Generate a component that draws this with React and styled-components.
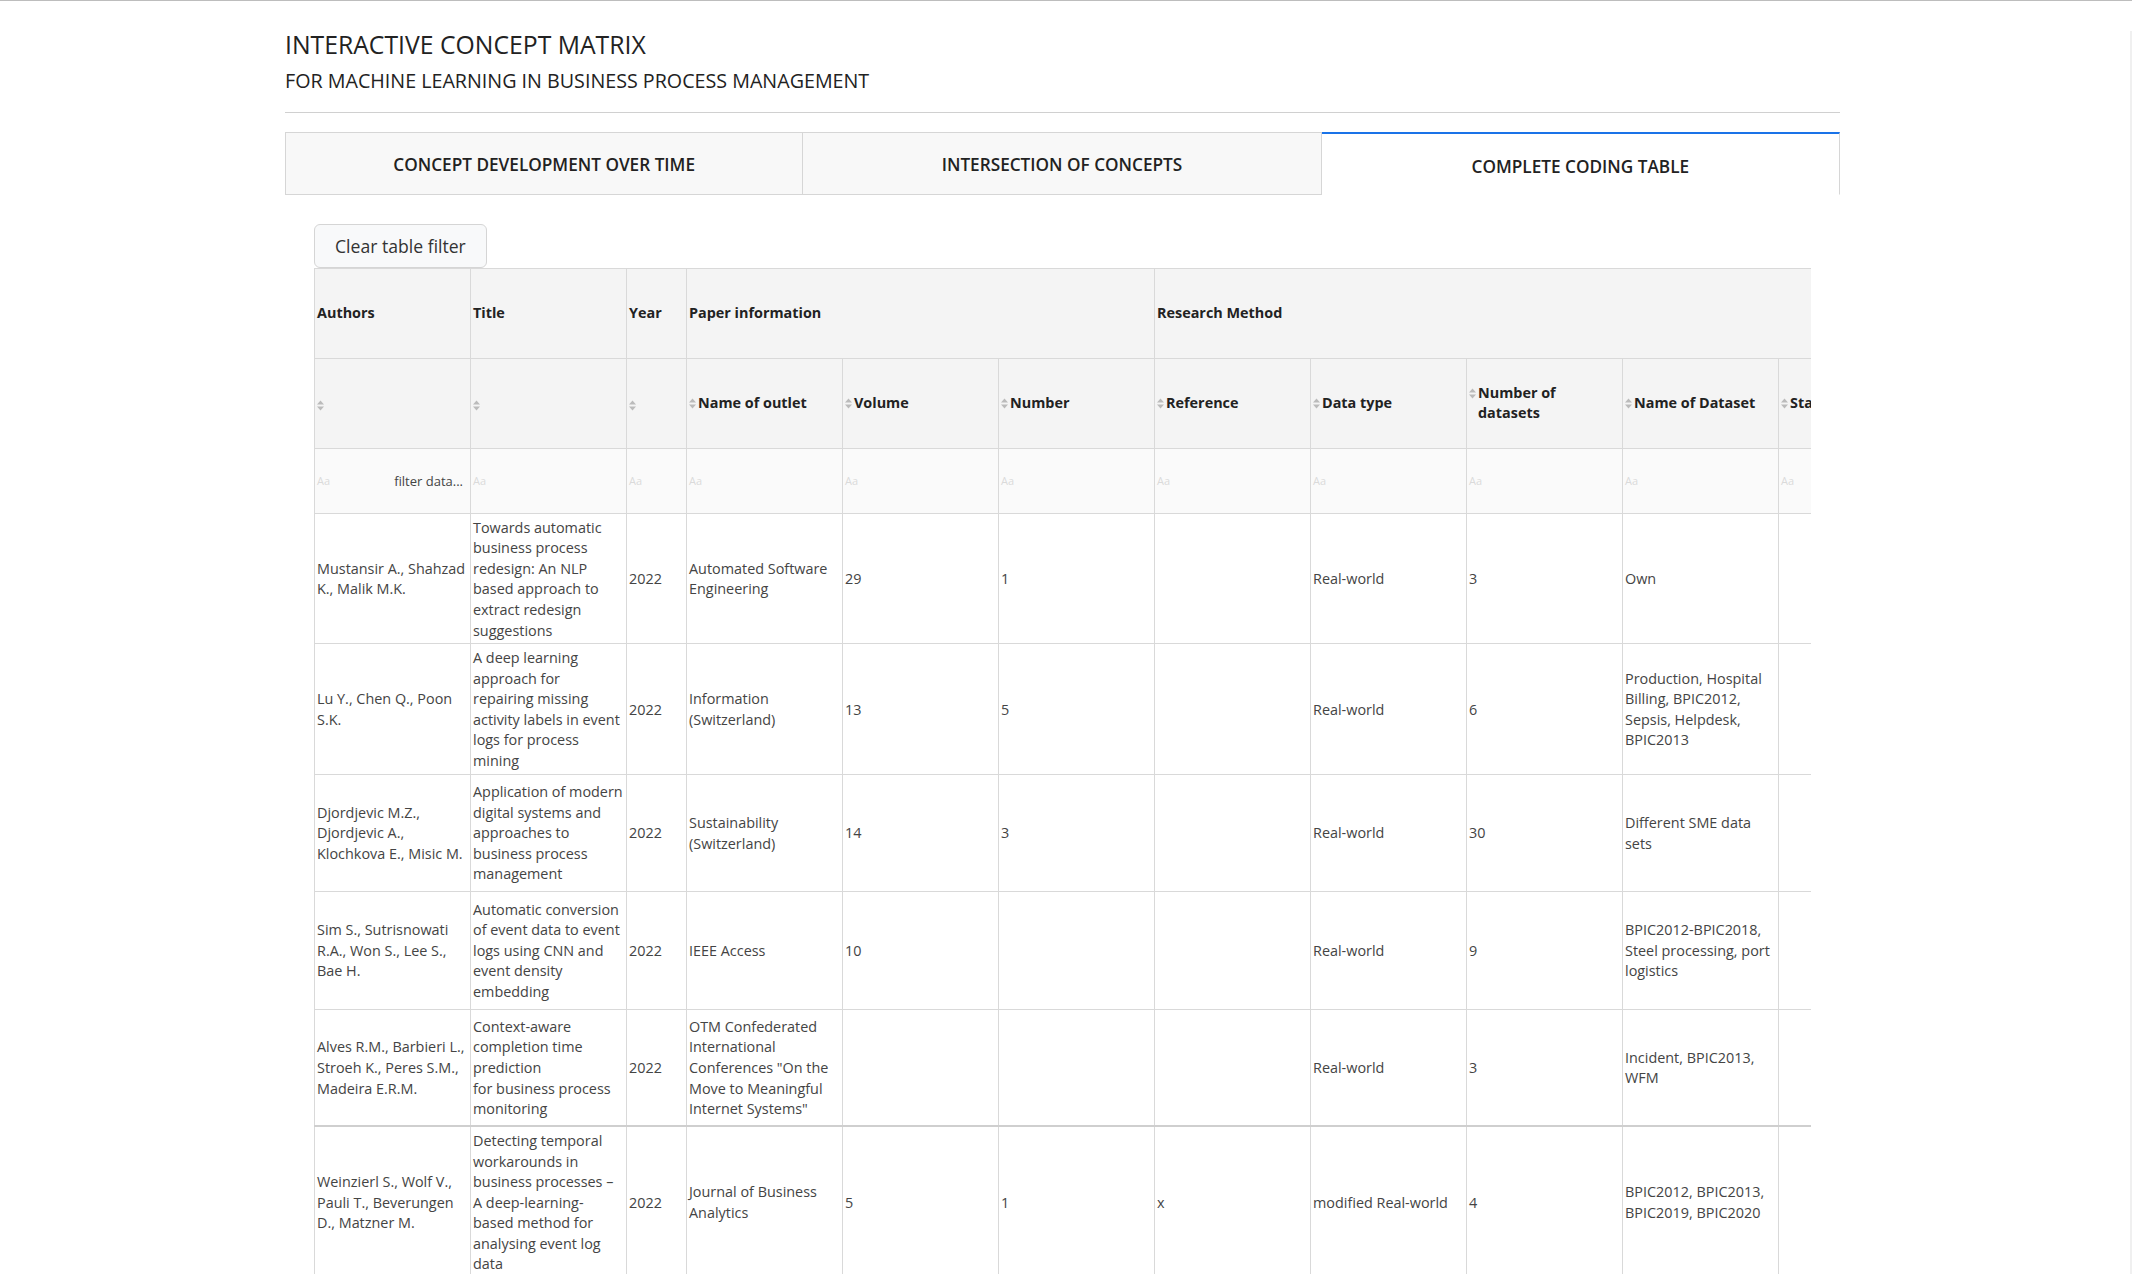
import React from 'react';
import styled, { createGlobalStyle, css } from 'styled-components';

const Colors = {
  text: '#222',
  body: '#444',
  border: '#d9d9d9',
  head: '#f4f4f4',
  filter: '#fafafa',
  tab: '#f8f8f8',
  blue: '#1a73e8',
  muted: '#bbb',
};

const GlobalStyle = createGlobalStyle`
  * { box-sizing: border-box; }
  body {
    margin: 0;
    font-family: "Open Sans", "Liberation Sans", sans-serif;
    color: ${Colors.text};
    background: #fff;
    border-top: 1px solid #bdbdbd;
  }
`;

const Page = styled.div`
  min-height: 1273px;
  border-right: 2px solid #f0f0f0;
`;

const Container = styled.main`
  width: 1555px;
  margin-left: 285px;
`;

const Title = styled.h1`
  margin: 30px 0 0;
  font-size: 24.75px;
  line-height: 28.8px;
  font-weight: 500;
`;

const Subtitle = styled.h2`
  margin: 9px 0 0;
  font-size: 19.7px;
  line-height: 24px;
  font-weight: 400;
`;

const Divider = styled.hr`
  margin: 19px 0 0;
  border: none;
  border-top: 1px solid #d0d0d0;
`;

const TabBar = styled.nav`
  display: grid;
  grid-template-columns: repeat(3, 1fr);
  margin-top: 19px;
`;

const Tab = styled.button`
  height: 63px;
  padding-top: 4px;
  font-family: inherit;
  font-size: 17.2px;
  font-weight: 600;
  color: ${Colors.text};
  background: ${Colors.tab};
  border: 1px solid #d6d6d6;
  border-left-width: 0;
  &:first-child { border-left-width: 1px; }
  ${props => props.active && css`
    background: #fff;
    border-top: 2px solid ${Colors.blue};
    border-bottom-color: transparent;
    padding-top: 6px;
  `}
`;

const Panel = styled.section`
  padding: 29px 29px 0;
`;

const ClearButton = styled.button`
  height: 44px;
  padding: 0 20px;
  font-family: inherit;
  font-size: 17.6px;
  color: #333;
  background: #f8f9fa;
  border: 1px solid #d5d5d5;
  border-radius: 6px;
`;

const TableScroll = styled.div`
  width: 1497px;
  overflow: hidden;
`;

const Table = styled.table`
  width: 1620px;
  table-layout: fixed;
  border-collapse: collapse;
  font-size: 14.4px;
  line-height: 20.57px;
`;

const HeadRow = styled.tr`
  height: ${props => props.h}px;
`;

const Th = styled.th`
  padding: 3px 2px;
  text-align: left;
  vertical-align: middle;
  font-weight: 700;
  color: ${Colors.text};
  background: ${Colors.head};
  border: 1px solid ${Colors.border};
`;

const SortLabel = styled.div`
  display: flex;
  align-items: flex-start;
  gap: 2px;
`;

const SortMark = styled.svg`
  flex: none;
  margin-top: 5px;
`;

const FilterCell = styled.td`
  padding: 3px 2px;
  background: ${Colors.filter};
  border: 1px solid ${Colors.border};
  vertical-align: middle;
`;

const FilterInner = styled.div`
  display: flex;
  justify-content: space-between;
  align-items: center;
`;

const Placeholder = styled.span`
  font-size: 11px;
  color: #dadada;
`;

const FilterHint = styled.span`
  margin-right: 5px;
  font-size: 13px;
  color: #444;
`;

const Row = styled.tr`
  height: ${props => (props.h ? `${props.h}px` : 'auto')};
  ${props => props.divider && css`
    border-top: 2px solid #cfcfcf;
  `}
`;

const Td = styled.td`
  padding: 4px 2px 2px;
  vertical-align: middle;
  color: ${Colors.body};
  border: 1px solid ${Colors.border};
  white-space: pre-line;
  overflow: hidden;
`;

const SortIcon = () => (
  <SortMark width="7" height="11" viewBox="0 0 7 11">
    <polygon points="3.5,0.5 7,4.5 0,4.5" fill={Colors.muted} />
    <polygon points="0,6.5 7,6.5 3.5,10.5" fill={Colors.muted} />
  </SortMark>
);

const widths = [156, 156, 60, 156, 156, 156, 156, 156, 156, 156, 156];

const columns = [
  '', '', '', 'Name of outlet', 'Volume', 'Number', 'Reference',
  'Data type', 'Number of datasets', 'Name of Dataset', 'Standard',
];

const rows = [
  {
    h: 130,
    cells: ['Mustansir A., Shahzad K., Malik M.K.', 'Towards automatic business process redesign: An NLP based approach to extract redesign suggestions', '2022', 'Automated Software Engineering', '29', '1', '', 'Real-world', '3', 'Own', ''],
  },
  {
    h: 129,
    cells: ['Lu Y., Chen Q., Poon S.K.', 'A deep learning approach for repairing missing activity labels in event logs for process mining', '2022', 'Information (Switzerland)', '13', '5', '', 'Real-world', '6', 'Production, Hospital Billing, BPIC2012, Sepsis, Helpdesk, BPIC2013', ''],
  },
  {
    h: 117,
    cells: ['Djordjevic M.Z., Djordjevic A., Klochkova E., Misic M.', 'Application of modern digital systems and approaches to business process management', '2022', 'Sustainability (Switzerland)', '14', '3', '', 'Real-world', '30', 'Different SME data sets', ''],
  },
  {
    h: 118,
    cells: ['Sim S., Sutrisnowati R.A., Won S., Lee S., Bae H.', 'Automatic conversion of event data to event logs using CNN and event density embedding', '2022', 'IEEE Access', '10', '', '', 'Real-world', '9', 'BPIC2012-BPIC2018, Steel processing, port logistics', ''],
  },
  {
    h: 117,
    cells: ['Alves R.M., Barbieri L., Stroeh K., Peres S.M., Madeira E.R.M.', 'Context-aware completion time prediction\nfor business process monitoring', '2022', 'OTM Confederated International Conferences "On the Move to Meaningful Internet Systems"', '', '', '', 'Real-world', '3', 'Incident, BPIC2013, WFM', ''],
  },
  {
    divider: true,
    cells: ['Weinzierl S., Wolf V., Pauli T., Beverungen D., Matzner M.', 'Detecting temporal workarounds in business processes – A deep-learning-based method for analysing event log data', '2022', 'Journal of Business Analytics', '5', '1', 'x', 'modified Real-world', '4', 'BPIC2012, BPIC2013, BPIC2019, BPIC2020', ''],
  },
];

const tabs = ['CONCEPT DEVELOPMENT OVER TIME', 'INTERSECTION OF CONCEPTS', 'COMPLETE CODING TABLE'];

export default function App() {
  return (
    <Page>
      <GlobalStyle />
      <Container>
        <Title>INTERACTIVE CONCEPT MATRIX</Title>
        <Subtitle>FOR MACHINE LEARNING IN BUSINESS PROCESS MANAGEMENT</Subtitle>
        <Divider />
        <TabBar>
          {tabs.map((t, i) => (
            <Tab key={t} active={i === 2}>{t}</Tab>
          ))}
        </TabBar>
        <Panel>
          <ClearButton>Clear table filter</ClearButton>
          <TableScroll>
            <Table>
              <colgroup>
                {widths.map((w, i) => <col key={i} style={{ width: w }} />)}
              </colgroup>
              <thead>
                <HeadRow h={90}>
                  <Th>Authors</Th>
                  <Th>Title</Th>
                  <Th>Year</Th>
                  <Th colSpan={3}>Paper information</Th>
                  <Th colSpan={5}>Research Method</Th>
                </HeadRow>
                <HeadRow h={90}>
                  {columns.map((c, i) => (
                    <Th key={i}>
                      <SortLabel>
                        <SortIcon />
                        {c && <span>{c}</span>}
                      </SortLabel>
                    </Th>
                  ))}
                </HeadRow>
                <HeadRow h={65}>
                  {columns.map((c, i) => (
                    <FilterCell key={i}>
                      <FilterInner>
                        <Placeholder>Aa</Placeholder>
                        {i === 0 && <FilterHint>filter data...</FilterHint>}
                      </FilterInner>
                    </FilterCell>
                  ))}
                </HeadRow>
              </thead>
              <tbody>
                {rows.map((r, ri) => (
                  <Row key={ri} h={r.h} divider={r.divider}>
                    {r.cells.map((c, ci) => <Td key={ci}>{c}</Td>)}
                  </Row>
                ))}
              </tbody>
            </Table>
          </TableScroll>
        </Panel>
      </Container>
    </Page>
  );
}
